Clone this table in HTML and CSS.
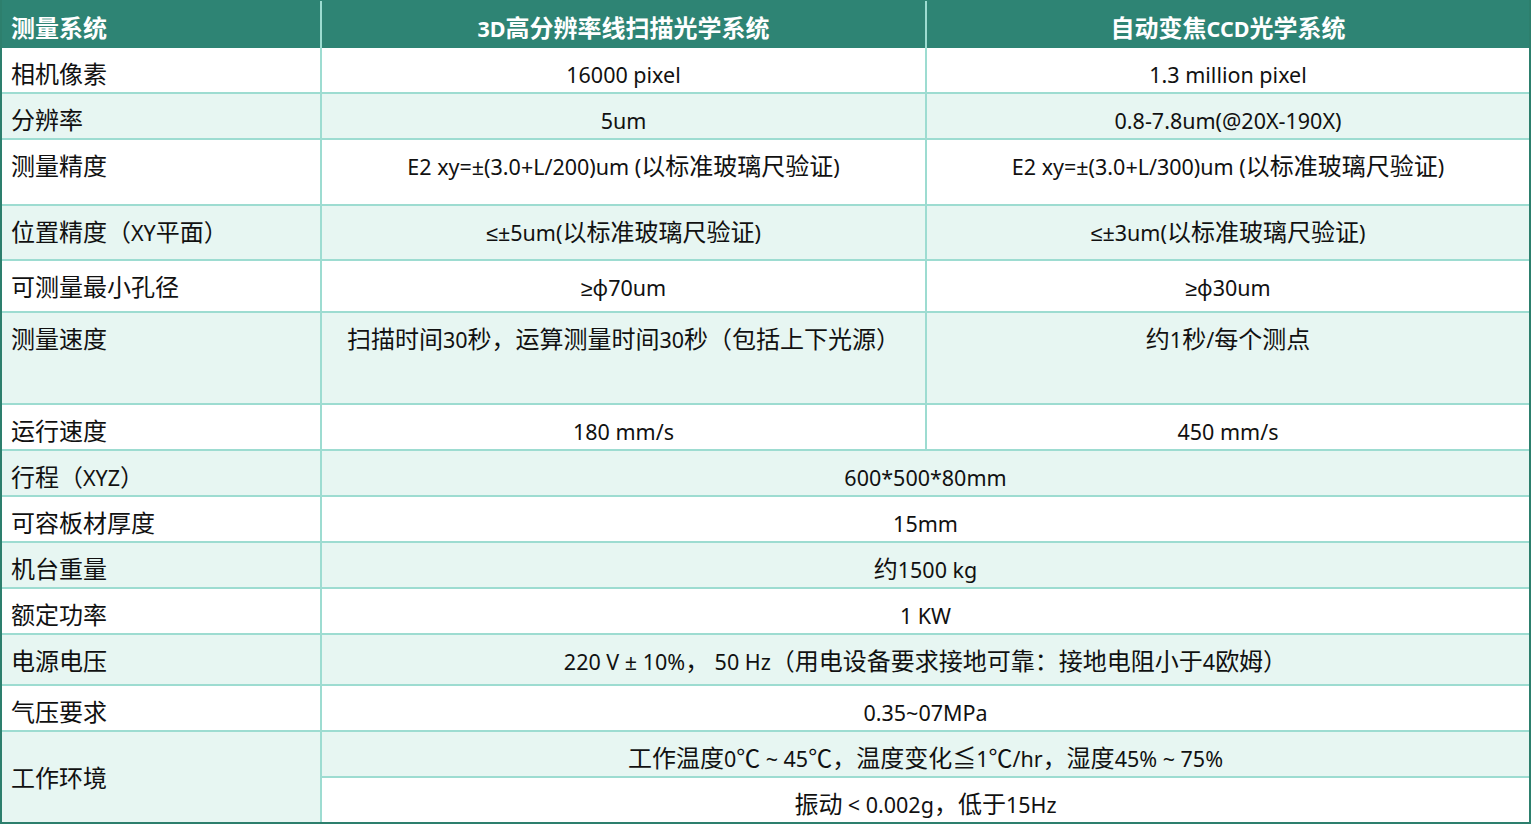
FILE: index.html
```html
<!DOCTYPE html>
<html lang="zh-CN">
<head>
<meta charset="utf-8">
<title>测量系统</title>
<link rel="stylesheet" href="styles.css">
</head>
<body>
<div class="sheet">
  <div class="head">
    <div class="hc left">测量系统</div>
    <div class="hc"><span class="en">3D</span>高分辨率线扫描光学系统</div>
    <div class="hc">自动变焦<span class="en">CCD</span>光学系统</div>
  </div>
  <div class="body">
    <div class="c left w">相机像素</div>
    <div class="c w"><span class="en">16000 pixel</span></div>
    <div class="c w"><span class="en">1.3 million pixel</span></div>

    <div class="c left g">分辨率</div>
    <div class="c g"><span class="en">5um</span></div>
    <div class="c g"><span class="en">0.8-7.8um(@20X-190X)</span></div>

    <div class="c left w">测量精度</div>
    <div class="c w"><span class="en">E2 xy=±(3.0+L/200)um (</span>以标准玻璃尺验证<span class="en">)</span></div>
    <div class="c w"><span class="en">E2 xy=±(3.0+L/300)um (</span>以标准玻璃尺验证<span class="en">)</span></div>

    <div class="c left g">位置精度（<span class="en">XY</span>平面）</div>
    <div class="c g"><span class="sym">≤</span><span class="en">±5um(</span>以标准玻璃尺验证<span class="en">)</span></div>
    <div class="c g"><span class="sym">≤</span><span class="en">±3um(</span>以标准玻璃尺验证<span class="en">)</span></div>

    <div class="c left w">可测量最小孔径</div>
    <div class="c w"><span class="sym">≥</span><span class="en">ϕ70um</span></div>
    <div class="c w"><span class="sym">≥</span><span class="en">ϕ30um</span></div>

    <div class="c left g">测量速度</div>
    <div class="c g">扫描时间<span class="en">30</span>秒，运算测量时间<span class="en">30</span>秒（包括上下光源）</div>
    <div class="c g">约<span class="en">1</span>秒<span class="en">/</span>每个测点</div>

    <div class="c left w">运行速度</div>
    <div class="c w"><span class="en">180 mm/s</span></div>
    <div class="c w"><span class="en">450 mm/s</span></div>

    <div class="c left g">行程（<span class="en">XYZ</span>）</div>
    <div class="c g span2"><span class="en">600*500*80mm</span></div>

    <div class="c left w">可容板材厚度</div>
    <div class="c w span2"><span class="en">15mm</span></div>

    <div class="c left g">机台重量</div>
    <div class="c g span2">约<span class="en">1500 kg</span></div>

    <div class="c left w">额定功率</div>
    <div class="c w span2"><span class="en">1 KW</span></div>

    <div class="c left g">电源电压</div>
    <div class="c g span2"><span class="en">220 V ± 10%</span>， <span class="en">50 Hz</span>（用电设备要求接地可靠：接地电阻小于<span class="en">4</span>欧姆）</div>

    <div class="c left w">气压要求</div>
    <div class="c w span2"><span class="en">0.35~07MPa</span></div>

    <div class="c left g tall">工作环境</div>
    <div class="c g span2">工作温度<span class="en">0</span>℃ <span class="en">~ 45</span>℃，温度变化≦<span class="en">1</span>℃<span class="en">/hr</span>，湿度<span class="en">45% ~ 75%</span></div>
    <div class="c w span2">振动 <span class="en">&lt; 0.002g</span>，低于<span class="en">15Hz</span></div>
  </div>
</div>
</body>
</html>
```

FILE: styles.css
```css
html, body {
  margin: 0;
  padding: 0;
  background: #ffffff;
}

.sheet {
  width: 1531px;
  box-sizing: border-box;
  border-left: 2px solid #2d7f6d;
  border-right: 2px solid #2d7f6d;
  border-bottom: 2px solid #2d7f6d;
  font-family: "Noto Sans CJK SC", "Noto Sans", sans-serif;
  font-size: 24px;
  line-height: 30px;
  color: #111111;
}

.en {
  font-family: "Noto Sans", "Noto Sans CJK SC", sans-serif;
  font-size: 21.5px;
}

.sym {
  font-family: "Liberation Sans", "DejaVu Sans", sans-serif;
  font-size: 21.5px;
}

.head,
.body {
  display: grid;
  grid-template-columns: 318px 603px 602px;
  column-gap: 2px;
  background: #9ddcd1;
}

.head {
  border-top: 1px solid #2e8474;
  grid-template-rows: 47px;
}

.body {
  row-gap: 2px;
  grid-template-rows: 44px 44px 64px 53px 50px 90px 44px 44px 44px 44px 44px 49px 44px 44px 44px;
}

.hc {
  background: #2e8474;
  color: #ffffff;
  font-weight: 700;
  text-align: center;
  padding-top: 11px;
  box-sizing: border-box;
}

.c {
  text-align: center;
  padding-top: 10px;
  box-sizing: border-box;
  white-space: nowrap;
}

.left {
  text-align: left;
  padding-left: 9px;
}

.w { background: #ffffff; }
.g { background: #e7f6f2; }

.span2 { grid-column: span 2; }

.tall {
  grid-row: span 2;
  display: flex;
  align-items: center;
  padding-top: 0;
}
```
